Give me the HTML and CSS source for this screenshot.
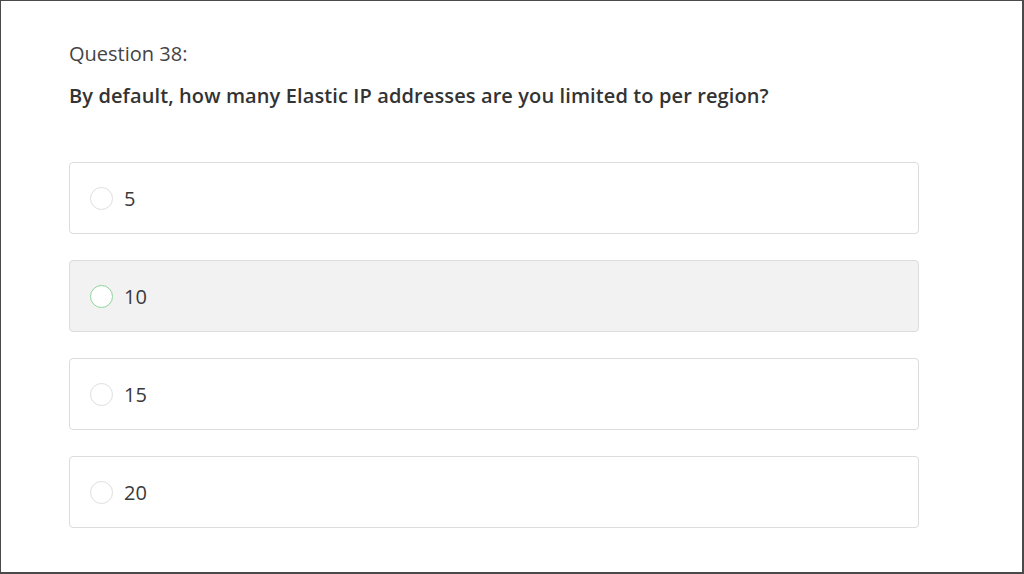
FILE: index.html
```html
<!DOCTYPE html>
<html>
<head>
<meta charset="utf-8">
<link rel="stylesheet" href="styles.css">
</head>
<body>
<div class="frame">
  <div class="quiz">
    <div class="qnum">Question 38:</div>
    <div class="qtext">By default, how many Elastic IP addresses are you limited to per region?</div>
    <div class="options">
      <div class="option"><span class="radio"></span><span class="label">5</span></div>
      <div class="option hover"><span class="radio"></span><span class="label">10</span></div>
      <div class="option"><span class="radio"></span><span class="label">15</span></div>
      <div class="option"><span class="radio"></span><span class="label">20</span></div>
    </div>
  </div>
</div>
</body>
</html>
```
FILE: styles.css
```css
html, body {
  margin: 0;
  padding: 0;
  background: #fff;
}
.frame {
  box-sizing: border-box;
  width: 1024px;
  height: 574px;
  border-top: 1px solid #4a4a4a;
  border-left: 1px solid #4a4a4a;
  border-right: 2px solid #4a4a4a;
  border-bottom: 2px solid #4a4a4a;
  overflow: hidden;
}
.quiz {
  padding: 39px 0 0 68px;
  font-family: "Open Sans", "Liberation Sans", sans-serif;
  color: #3c3c3c;
}
.qnum {
  font-size: 20px;
  line-height: 28px;
  color: #444;
}
.qtext {
  margin-top: 14px;
  font-size: 20px;
  line-height: 28px;
  font-weight: 600;
  letter-spacing: 0.11px;
  color: #333;
}
.options {
  margin-top: 52px;
  display: flex;
  flex-direction: column;
  gap: 26px;
  width: 850px;
}
.option {
  box-sizing: border-box;
  height: 72px;
  border: 1px solid #dcdcdc;
  border-radius: 4px;
  display: flex;
  align-items: center;
  padding: 2px 0 0 20px;
  background: #fff;
}
.option.hover {
  background: #f2f2f2;
}
.radio {
  box-sizing: border-box;
  width: 23px;
  height: 23px;
  margin-top: -1px;
  border-radius: 50%;
  border: 1px solid #dedede;
  background: #fff;
  flex: none;
}
.option.hover .radio {
  border-color: #8fd49b;
}
.label {
  margin-left: 11px;
  font-size: 20px;
  line-height: 28px;
  color: #3a3a3a;
}
```
